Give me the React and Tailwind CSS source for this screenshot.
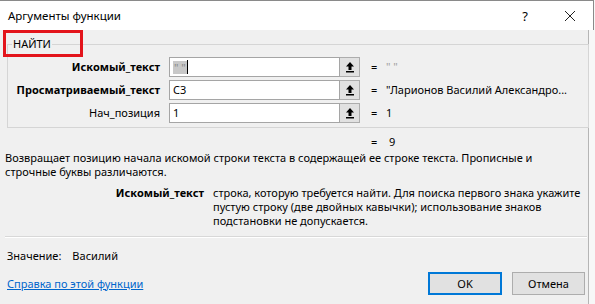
import React from 'react'

const font = { fontFamily: '"Noto Sans", "Open Sans", "Liberation Sans", sans-serif' }

function UpArrow() {
  return (
    <svg width="10" height="12" viewBox="0 0 10 12" className="block">
      <path d="M5 1 L9 5.5 L6.5 5.5 L6.5 9 L3.5 9 L3.5 5.5 L1 5.5 Z" fill="#000" />
      <rect x="1" y="10" width="8" height="1.5" fill="#000" />
    </svg>
  )
}

function ArgRow({ label, bold, children, value, valueClass = 'text-black' }) {
  return (
    <div className="flex h-[20px] items-center">
      <div className={`w-[152px] text-right text-[11px] leading-[14px] ${bold ? 'font-bold' : ''}`}>{label}</div>
      <div className="ml-[9px] flex h-[20px] w-[191px]">
        <div className="flex h-full w-[171px] items-center border border-[#a5a5a5] bg-white pl-[3px] text-[11px] leading-[14px]">
          {children}
        </div>
        <div className="flex h-full w-[20px] items-center justify-center border border-l-0 border-[#adadad] bg-[#e1e1e1]">
          <UpArrow />
        </div>
      </div>
      <div className="ml-[11px] w-[15px] text-[11px] leading-[14px]">=</div>
      <div className={`text-[11px] leading-[14px] whitespace-nowrap ${valueClass}`}>{value}</div>
    </div>
  )
}

export default function App() {
  return (
    <div className="relative h-[304px] w-[595px] overflow-hidden bg-[#f7f7f7] text-black" style={font}>
      {/* title bar */}
      <div className="flex h-[30px] w-[594px] items-center border-t border-r border-[#8a8a8a] bg-white">
        <span className="ml-[8px] text-[11.5px] leading-[14px]">Аргументы функции</span>
        <span className="ml-auto mr-[36px] text-[13px] leading-[14px]">?</span>
        <svg width="12" height="12" viewBox="0 0 12 12" className="mr-[17px]">
          <path d="M1 1 L11 11 M11 1 L1 11" stroke="#222" strokeWidth="1" />
        </svg>
      </div>

      <div className="h-[274px] w-[589px] border-r border-[#b5b5b5] bg-[#f0f0f0] pt-[7px]">
        <fieldset className="ml-[7px] w-[582px] border border-[#d5d5d5] pb-[4px] pt-[6px]">
          <legend className="ml-[4px] px-[1px] text-[11px] leading-[14px]">НАЙТИ</legend>
          <div className="flex flex-col gap-[3px]">
            <ArgRow label="Искомый_текст" bold value={'" "'} valueClass="text-[#a0a0a0]">
              <span className="bg-[#c8c8c8] px-[1px] text-[#888] leading-[13px]">" "</span>
              <span className="h-[14px] w-[1px] bg-black" />
            </ArgRow>
            <ArgRow label="Просматриваемый_текст" bold value={'"Ларионов Василий Александро...'}>
              <span>C3</span>
            </ArgRow>
            <ArgRow label="Нач_позиция" value="1">
              <span>1</span>
            </ArgRow>
          </div>
        </fieldset>

        <div className="mt-[7px] flex h-[14px] text-[11px] leading-[14px]">
          <span className="ml-[371px] w-[17px]">=</span>
          <span className="ml-[1px]">9</span>
        </div>

        <p className="mt-[2px] pl-[5px] text-[11px] leading-[14px] whitespace-nowrap">
          Возвращает позицию начала искомой строки текста в содержащей ее строке текста. Прописные и
          <br />
          строчные буквы различаются.
        </p>

        <div className="mt-[7px] flex text-[11px] leading-[14px]">
          <div className="w-[204px] text-right font-bold">Искомый_текст</div>
          <div className="ml-[9px] whitespace-nowrap">
            строка, которую требуется найти. Для поиска первого знака укажите
            <br />
            пустую строку (две двойных кавычки); использование знаков
            <br />
            подстановки не допускается.
          </div>
        </div>

        <div className="ml-[5px] mt-[8px] h-[2px] w-[582px] border-t border-[#d8d8d8] border-b border-b-white" />

        <div className="mt-[11px] flex pl-[7px] text-[11px] leading-[14px]">
          <span>Значение:</span>
          <span className="ml-[11px]">Василий</span>
        </div>

        <div className="mt-[9px] flex h-[23px] items-center pl-[7px]">
          <a href="#" className="text-[11px] leading-[14px] text-[#0066cc] underline">Справка по этой функции</a>
          <button className="ml-auto h-[23px] w-[74px] border-2 border-[#0078d7] bg-[#e1e1e1] text-[11px] leading-[14px]">OK</button>
          <button className="ml-[10px] mr-[3px] h-[23px] w-[73px] border border-[#adadad] bg-[#e1e1e1] text-[11px] leading-[14px]">Отмена</button>
        </div>
      </div>

      {/* red annotation */}
      <div className="absolute left-[3px] top-[30px] h-[27px] w-[80px] border-[3px] border-[#e3141b]" />
    </div>
  )
}
